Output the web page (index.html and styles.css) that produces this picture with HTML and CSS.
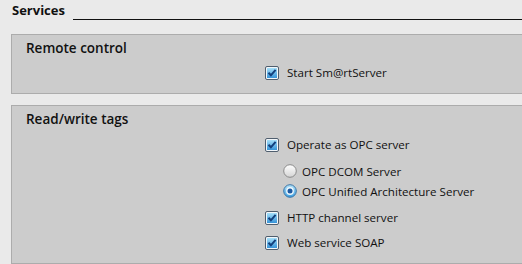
FILE: index.html
```html
<!DOCTYPE html>
<html>
<head>
<meta charset="utf-8">
<link rel="stylesheet" href="styles.css">
</head>
<body>
<svg class="defs" width="0" height="0" aria-hidden="true">
  <defs>
    <linearGradient id="cbfill" x1="0" y1="0" x2="0" y2="1">
      <stop offset="0" stop-color="#a6e0fa"/>
      <stop offset="1" stop-color="#3593d8"/>
    </linearGradient>
    <linearGradient id="rdoff" x1="0" y1="0" x2="0" y2="1">
      <stop offset="0" stop-color="#ffffff"/>
      <stop offset="1" stop-color="#d4d4d4"/>
    </linearGradient>
    <linearGradient id="rdon" x1="0" y1="0" x2="0" y2="1">
      <stop offset="0" stop-color="#b8e6fb"/>
      <stop offset="1" stop-color="#3c9ee0"/>
    </linearGradient>
    <symbol id="cb" viewBox="0 0 14 14">
      <rect x="0.5" y="0.5" width="13" height="13" rx="1.5" fill="#f2f6f9" stroke="#4f5e6e"/>
      <rect x="2" y="2" width="10" height="10" fill="url(#cbfill)"/>
      <path d="M3.5 6.8 L5.9 9.3 L10.6 3.9" fill="none" stroke="#123f7c" stroke-width="2"/>
    </symbol>
    <symbol id="roff" viewBox="0 0 14 14">
      <circle cx="7" cy="7" r="6.3" fill="url(#rdoff)" stroke="#8a8a8a"/>
    </symbol>
    <symbol id="ron" viewBox="0 0 14 14">
      <circle cx="7" cy="7" r="6.3" fill="url(#rdon)" stroke="#3a74a6"/>
      <circle cx="7" cy="7" r="3.9" fill="#eef8fd"/>
      <circle cx="7" cy="7" r="2.5" fill="#1d58a0"/>
    </symbol>
  </defs>
</svg>

<div class="page">
  <div class="section-head">
    <span class="section-title">Services</span>
    <span class="section-rule"></span>
  </div>

  <div class="group group-remote">
    <div class="group-title">Remote control</div>
    <div class="options">
      <div class="opt">
        <svg class="box" width="14" height="14"><use href="#cb"/></svg>
        <span>Start Sm@rtServer</span>
      </div>
    </div>
  </div>

  <div class="group group-rw">
    <div class="group-title">Read/write tags</div>
    <div class="options">
      <div class="opt">
        <svg class="box" width="14" height="14"><use href="#cb"/></svg>
        <span>Operate as OPC server</span>
      </div>
      <div class="radios">
        <div class="radio">
          <svg class="rb" width="14" height="14"><use href="#roff"/></svg>
          <span>OPC DCOM Server</span>
        </div>
        <div class="radio">
          <svg class="rb" width="14" height="14"><use href="#ron"/></svg>
          <span>OPC Unified Architecture Server</span>
        </div>
      </div>
      <div class="opt">
        <svg class="box" width="14" height="14"><use href="#cb"/></svg>
        <span>HTTP channel server</span>
      </div>
      <div class="opt">
        <svg class="box" width="14" height="14"><use href="#cb"/></svg>
        <span>Web service SOAP</span>
      </div>
    </div>
  </div>
</div>
</body>
</html>
```

FILE: styles.css
```css
html, body {
  margin: 0;
  padding: 0;
}
body {
  background: #eaeaea;
  font-family: "Open Sans", "Noto Sans", sans-serif;
  color: #111;
  width: 522px;
  height: 264px;
  overflow: hidden;
}
.defs {
  display: block;
  width: 0;
  height: 0;
  overflow: hidden;
}
.page {
  display: flex;
  flex-direction: column;
}
.section-head {
  display: flex;
  align-items: flex-end;
  height: 20px;
  padding-left: 12px;
  gap: 8px;
}
.section-title {
  font-weight: 700;
  font-size: 13px;
  line-height: 18px;
  height: 19px;
}
.section-rule {
  flex: 1;
  height: 1px;
  background: #111;
}
.group {
  margin-left: 11px;
  background: #cccccc;
  border: 1px solid #acacac;
  border-right: none;
  box-sizing: border-box;
}
.group-remote {
  margin-top: 14px;
  height: 60px;
}
.group-rw {
  margin-top: 11px;
  height: 159px;
}
.group-title {
  font-size: 13.5px;
  font-weight: 600;
  line-height: 18px;
  padding-left: 14px;
  padding-top: 4px;
}
.options {
  display: flex;
  flex-direction: column;
  padding-left: 253px;
  font-size: 11.6px;
}
.opt, .radio {
  display: flex;
  align-items: center;
}
.opt {
  height: 25px;
}
.radio {
  height: 20px;
}
.opt .box {
  margin-right: 8px;
  flex: none;
}
.group-remote .options {
  padding-top: 3px;
}
.group-rw .options {
  padding-top: 4px;
}
.radios {
  display: flex;
  flex-direction: column;
  padding-left: 18px;
  padding-top: 4px;
  padding-bottom: 4px;
}
.radio .rb {
  margin-right: 5px;
  flex: none;
}
```
